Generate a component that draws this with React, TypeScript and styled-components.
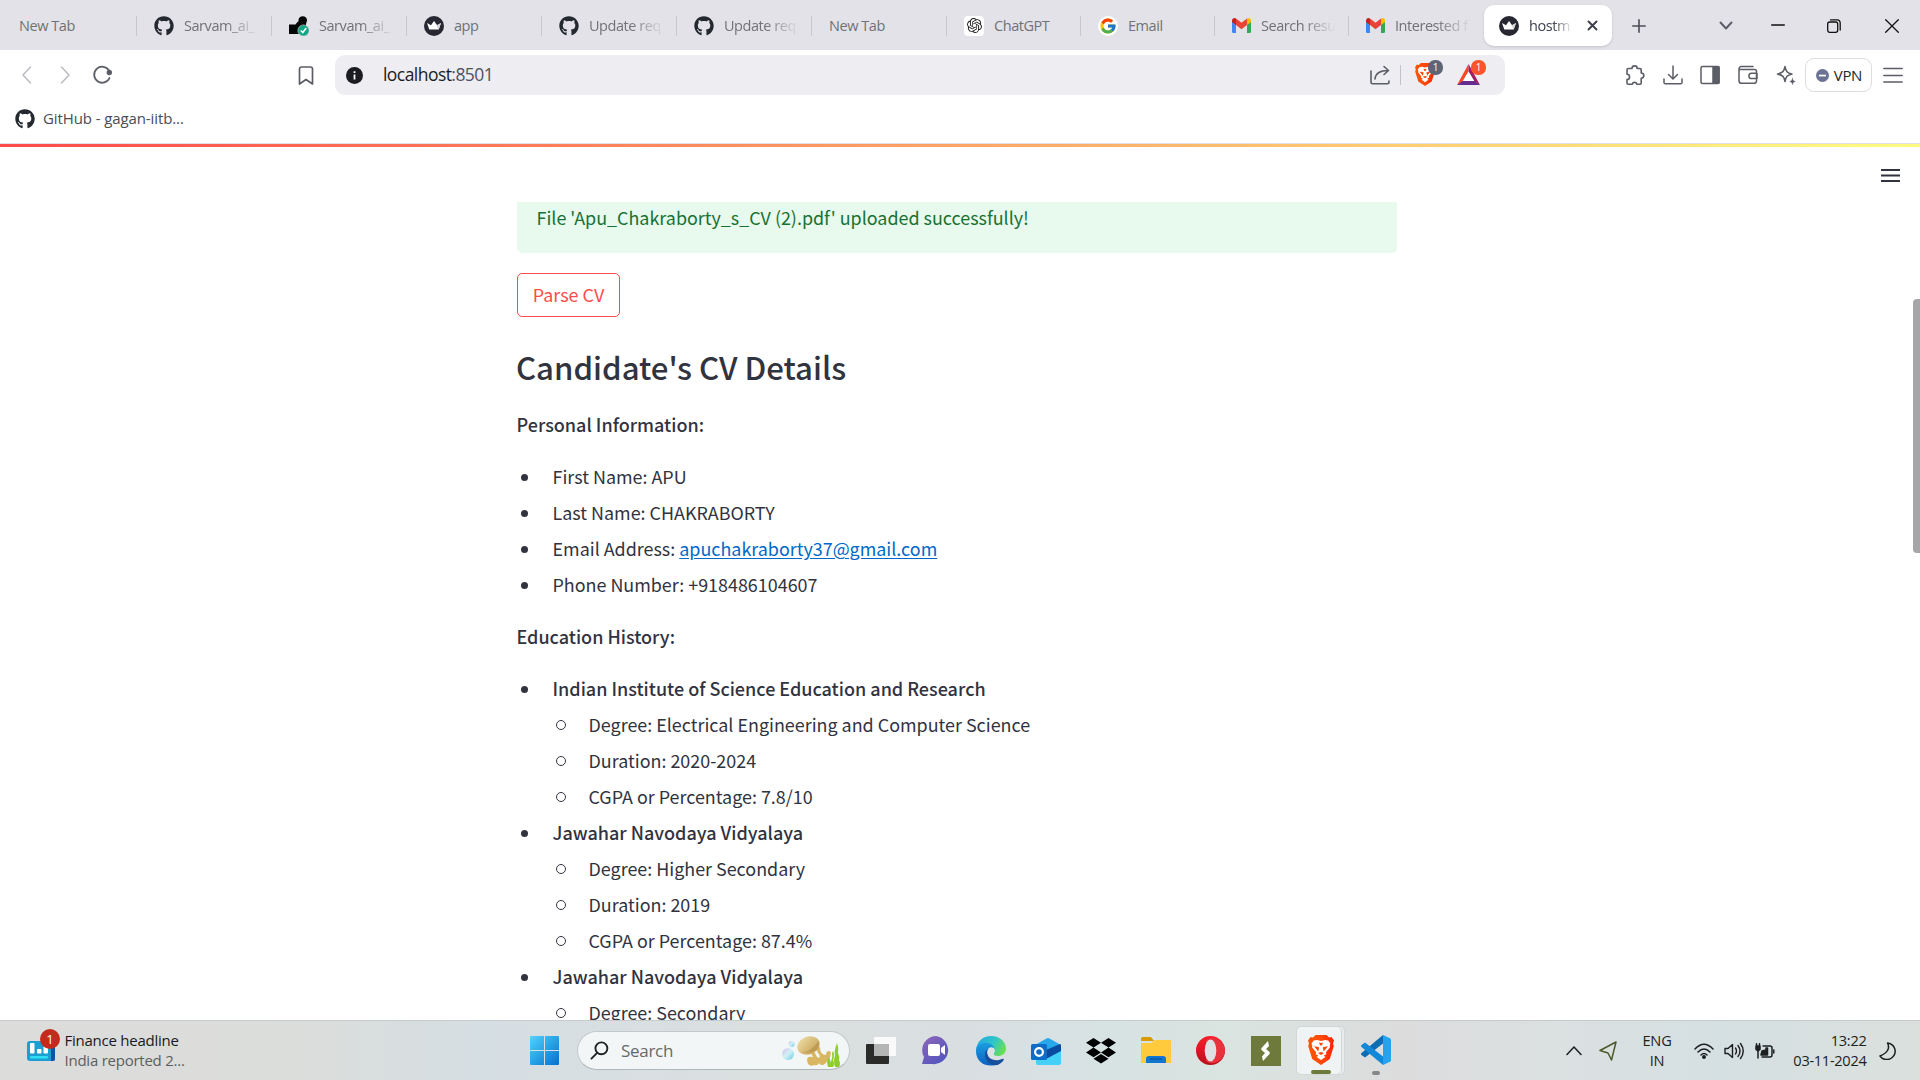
import React from "react";
import styled, { createGlobalStyle } from "styled-components";
import { FaGithub } from "react-icons/fa";
import { FcGoogle } from "react-icons/fc";
import { SiOpenai } from "react-icons/si";

const ui = `"Open Sans", "Noto Sans", sans-serif`;
const body = `"Noto Sans CJK SC", "Open Sans", sans-serif`;

const Global = createGlobalStyle`
  * { box-sizing: border-box; }
  html, body { margin: 0; padding: 0; overflow: hidden; background: #fff; }
  svg { display: block; flex: none; }
`;

const Screen = styled.div`
  width: 1920px; height: 1080px; display: flex; flex-direction: column;
  overflow: hidden; background: #fff; font-family: ${ui};
`;

/* ---------- tab strip ---------- */
const TabStrip = styled.div`
  height: 50px; flex: none; background: #e3e2e8; display: flex; align-items: center; padding-top: 1px;
`;
const Tab = styled.div<{ $w: number; $last?: boolean }>`
  width: ${p => p.$w}px; height: 20px; display: flex; align-items: center; flex: none;
  padding-left: 17px; gap: 10px; border-right: 1px solid ${p => (p.$last ? "transparent" : "#c9c8ce")};
  &:first-child { padding-left: 19px; }
`;
const TabLabel = styled.span<{ $w?: number; $fade?: boolean; $dark?: boolean }>`
  font-size: 14.5px; line-height: 22px; white-space: nowrap; flex: none;
  color: ${p => (p.$dark ? "#3b3e4f" : "#707275")};
  letter-spacing: -0.45px;
  width: ${p => (p.$w ? p.$w + "px" : "auto")};
  ${p => p.$fade && "mask-image: linear-gradient(90deg, #000 55%, transparent 100%);"}
`;
const ActiveTab = styled.div`
  width: 128px; height: 41px; border-radius: 10px; background: #fff; flex: none;
  display: flex; align-items: center; padding-left: 15px; gap: 10px; box-shadow: 0 1px 3px #0002;
`;
const WindowButtons = styled.div`
  margin-left: auto; display: flex; align-items: center; gap: 36px; padding-right: 21.5px;
`;
const Push = styled.div<{ $l: number }>`margin-left: ${p => p.$l}px; flex: none;`;

/* ---------- toolbar ---------- */
const Toolbar = styled.div`
  height: 50px; flex: none; display: flex; align-items: center; color: #5b5e66;
`;
const NavGroup = styled.div`
  width: 335px; display: flex; align-items: center; padding-left: 20px; flex: none;
`;
const AddressBar = styled.div`
  width: 1170px; height: 40px; border-radius: 10px; background: #ededf2; flex: none;
  display: flex; align-items: center; padding: 0 19px 0 11px;
`;
const Url = styled.span`
  font-size: 17.5px; line-height: 24px; color: #1b1c22; letter-spacing: -0.55px; margin: 0 0 2px 20px; flex: 1;
  i { font-style: normal; color: #4c5263; }
`;
const Rule = styled.div`width: 1px; height: 20px; background: #c2c2ca; margin: 0 14px 0 10px;`;
const BadgeHost = styled.div<{ $w: number }>`position: relative; width: ${p => p.$w}px; height: 24px;`;
const Badge = styled.span<{ $bg: string; $x: number }>`
  position: absolute; left: ${p => p.$x}px; top: -3px; width: 15px; height: 15px; border-radius: 7px;
  background: ${p => p.$bg}; color: #fff; font-size: 10px; line-height: 15px; text-align: center;
`;
const ToolIcons = styled.div`
  display: flex; align-items: center; gap: 17.7px; margin-left: 120px;
`;
const Vpn = styled.div`
  width: 67px; height: 34px; border: 1px solid #dddde3; border-radius: 9px; margin-left: -8px;
  display: flex; align-items: center; justify-content: center; gap: 5px;
  font-size: 15px; letter-spacing: -0.3px; color: #24252b;
`;
const Bookmarks = styled.div`
  height: 43px; flex: none; display: flex; align-items: center; gap: 8px; padding: 0 0 5px 15px;
`;
const BookmarkText = styled.span`
  font-size: 15px; line-height: 20px; letter-spacing: -0.1px; color: #4a4d54; margin-bottom: 2px;
`;

/* ---------- page ---------- */
const Page = styled.main`
  height: 877px; flex: none; display: flex; overflow: hidden; border-top: 1px solid #dfe0e8;
  flex-direction: column; font-family: ${body}; color: #31333f;
`;
const Decoration = styled.div`height: 3px; flex: none; background: linear-gradient(90deg, #ff4b4b, #fffd80);`;
const PageBody = styled.div`display: flex; flex: 1; min-height: 0;`;
const Side = styled.div`width: 517px; flex: none;`;
const Column = styled.div`
  width: 880px; flex: none; padding-top: 55px; display: flex; flex-direction: column; align-items: flex-start;
`;
const Right = styled.div`
  flex: 1; display: flex; justify-content: flex-end; align-items: flex-start; padding-top: 19px;
`;
const ScrollTrack = styled.div`width: 7px; height: 254px; margin-top: 133px; background: #a6a6a8; border-radius: 4px 0 0 4px; margin-left: 12px;`;
const Alert = styled.div`
  width: 880px; height: 51px; background: #e8f9ee; border-radius: 0 0 5px 5px; color: #177233;
  padding: 0 19.5px; font-size: 17.92px; line-height: 30px; flex: none;
`;
const ParseButton = styled.button`
  width: 103px; height: 44px; margin: 20px 0 0; padding: 0 0 2px; border: 1px solid #ff4b4b; border-radius: 5px;
  background: #fff; color: #ff4b4b; font: 400 17.92px/30px ${body}; flex: none;
`;
const Title = styled.h2`
  margin: 29px 0 0 -1px; font-size: 31.15px; line-height: 42px; font-weight: 500; flex: none;
`;
const Heading = styled.p<{ $top: number }>`
  margin: ${p => p.$top}px 0 19px -0.5px; font-size: 18px; line-height: 30px; font-weight: 500; flex: none;
`;
const List = styled.ul`margin: 0; padding: 0; list-style: none; flex: none;`;
const Row = styled.li<{ $nested?: boolean; $strong?: boolean }>`
  height: 36px; display: flex; align-items: center; line-height: 36px; white-space: pre;
  font-size: ${p => (p.$strong ? 18 : 17.92)}px;
  padding-left: ${p => (p.$nested ? 39 : 4)}px; font-weight: ${p => (p.$strong ? 500 : 400)};
  &::before {
    content: ""; flex: none; border-radius: 50%; margin-top: 2px;
    width: ${p => (p.$nested ? 8 : 7)}px; height: ${p => (p.$nested ? 8 : 7)}px;
    margin-right: ${p => (p.$nested ? 22.5 : 24.5)}px;
    ${p => (p.$nested ? "border: 1px solid #31333f;" : "background: #31333f;")}
  }
`;
const MailLink = styled.a`color: #0068c9; text-decoration: underline; text-underline-offset: 2px;`;

/* ---------- taskbar ---------- */
const Taskbar = styled.footer`
  height: 60px; flex: none; display: flex; align-items: center; border-top: 1px solid #c6cccd;
  background: linear-gradient(90deg, #dcdcdb 0, #dbdddb 300px, #d5dee2 480px, #d8dfe2 620px, #dbdfdf 800px,
    #d9dee1 960px, #d7e2e3 1100px, #dae4e0 1230px, #dcdcdd 1400px, #dbe0e1 1560px, #d5e0e2 1720px, #dbe0dd 1920px);
`;
const Widgets = styled.div`width: 517px; padding-left: 27px; display: flex; align-items: center; gap: 8.5px; flex: none;`;
const WidgetIcon = styled.div`position: relative; width: 29px; height: 44px; padding-top: 12px;`;
const WidgetBadge = styled.span`
  position: absolute; left: 13px; top: 0; width: 20px; height: 20px; border-radius: 50%; background: #c42b1c;
  color: #fff; font-size: 13px; line-height: 20px; text-align: center;
`;
const WidgetLines = styled.div`margin-bottom: 2px;`;
const WidgetText = styled.div<{ $c?: string }>`
  font-size: 15px; line-height: 20px; color: ${p => p.$c || "#1a1a1a"}; letter-spacing: -0.24px; white-space: nowrap;
`;
const Slot = styled.div`width: 55px; height: 59px; display: flex; align-items: center; justify-content: center; flex: none;`;
const SearchBox = styled.div`
  width: 273px; height: 39px; margin: 0 3px 0 5px; border-radius: 20px; background: #f3f6f7; border: 1px solid #c3cacc;
  border-bottom-color: #aeb6b8; display: flex; align-items: center; padding: 0 7px 0 12px; flex: none;
  span { flex: 1; margin-left: 12px; font-size: 17px; letter-spacing: -0.3px; color: #66696b; }
`;
const ActiveSlot = styled.div`
  width: 49px; height: 49px; display: flex; background: #e8ecec; border: 1px solid #d2d7d7; border-radius: 5px;
`;
const ActiveFace = styled.div`
  width: 45px; height: 47px; background: #f0f3f3; border-right: 1px solid #cfd5d5; border-radius: 5px; flex: none;
  display: flex; flex-direction: column; align-items: center; justify-content: space-between; padding: 8px 0 0 4px;
`;
const Indicator = styled.i<{ $w: number; $c: string }>`
  display: block; width: ${p => p.$w}px; height: 4px; border-radius: 2px; background: ${p => p.$c};
`;
const CodeStack = styled.div`
  height: 49px; display: flex; flex-direction: column; justify-content: space-between; align-items: center; padding-top: 9px;
`;
const Tray = styled.div`margin-left: auto; display: flex; align-items: center; padding-right: 24.5px; color: #1d1f20;`;
const TrayText = styled.div<{ $align: string; $w: number; $ls: number }>`
  width: ${p => p.$w}px; text-align: ${p => p.$align}; font-size: 14.6px; line-height: 20px; letter-spacing: ${p => p.$ls}px;
  white-space: nowrap; margin-top: -2px;
`;

/* ---------- drawings ---------- */
const Stroke = ({ w = 20, h = w, vb = "0 0 20 20", sw = 1.5, c = "currentColor", children }: any) => (
  <svg width={w} height={h} viewBox={vb} fill="none" stroke={c} strokeWidth={sw} strokeLinecap="round" strokeLinejoin="round">{children}</svg>
);
const Crown = () => (
  <svg width="20" height="20" viewBox="0 0 20 20">
    <circle cx="10" cy="10" r="10" fill="#262730" />
    <path d="M3 7l4 2.2L10 5l3 4.2L17 7l-2.3 6.4H5.3z" fill="#fff" /><path d="M10 5l3 4.2L17 7l-2.3 6.4z" fill="#d6d6da" />
  </svg>
);
const Sheet = () => (
  <svg width="20" height="20" viewBox="0 0 20 20">
    <path d="M0 8.500h6.500l1.500-2C9 6 9.500 5.500 9.500 4a4.300 4.300 0 018.500 0c0 2-.8 2.800-1 4.500V18H0z" fill="#050505" />
    <circle cx="14.5" cy="14.5" r="5.6" fill="#12a583" stroke="#e3e2e8" strokeWidth="0.6" /><path d="M11.800 14.500l2 2 3.500-4.400" stroke="#fff" strokeWidth="1.6" fill="none" />
  </svg>
);
const Gmail = () => (
  <svg width="19" height="15" viewBox="0 0 19 15">
    <path d="M0 3h4v12H1.3A1.3 1.3 0 010 13.7z" fill="#4285f4" />
    <path d="M15 3h4v10.700a1.300 1.300 0 01-1.300 1.300H15z" fill="#34a853" />
    <path d="M0 2.500C0 .4 2.300-.6 4 .6V7L0 4z" fill="#c5221f" />
    <path d="M19 2.500C19 .4 16.700-.6 15 .6V7l4-3z" fill="#fbbc04" />
    <path d="M4 .6l5.500 4.200L15 .6V7l-5.500 4.200L4 7z" fill="#ea4335" />
  </svg>
);
const White = styled.div<{ $r: number }>`
  width: 20px; height: 20px; border-radius: ${p => p.$r}px; background: #fff; display: flex; align-items: center; justify-content: center; flex: none;
`;
const Brave = ({ s, h }: { s: number; h: number }) => (
  <svg width={s} height={h} viewBox="0 0 26 30">
    <defs><linearGradient id="bv"><stop offset="0" stopColor="#ff5500" /><stop offset=".5" stopColor="#ff4a08" /><stop offset="1" stopColor="#ff2000" /></linearGradient></defs>
    <path d="M7.500 0h11l2.500 2.500 2.500-.4L26 5.500l-1 3 .8 2.500-4 13L13 30l-8.800-6L.2 11 1 8.500l-1-3L2.500 2.100l2.500.4z" fill="url(#bv)" />
    <path d="M9 5l4 .9L17 5l3.300.6 2.200 3.200-.8 2 .2 1.700-4 4.700.5 2-2.700 1.300 1.700 1.500L13 25l-4.400-3 1.700-1.500-2.700-1.300.5-2-4-4.700.2-1.700-.8-2 2.200-3.200z" fill="#fff" />
    <path d="M6 11.300l4.600.6.5 1.100-.9 3.500-1.500-1.900zM20 11.300l-4.600.6-.5 1.100.9 3.500 1.500-1.900zM10 18l3-.9 3 .9-3 2zM11 7.500l2 .4 2-.4-1 2.700-1 .3-1-.3z" fill="#ff4505" />
  </svg>
);
const Edge = () => (
  <svg width="30" height="30" viewBox="0 0 30 30">
    <defs>
      <linearGradient id="e1" x1="0" x2="1" y1=".2" y2=".6"><stop offset="0" stopColor="#21a8e2" /><stop offset=".55" stopColor="#30c6c8" /><stop offset="1" stopColor="#6be04f" /></linearGradient>
      <linearGradient id="e2" x1="0" x2="0" y1="0" y2="1"><stop offset="0" stopColor="#1c9de0" /><stop offset="1" stopColor="#0a62c4" /></linearGradient>
    </defs>
    <path d="M0 14C1 5 7 0 15 0c9 0 15 6 15 12.500 0 5-4 7.500-8 7.500-3.500 0-5-1.300-4.500-2.200 1.500-1.500 1.500-3.500.5-5C15 7 4 6 0 14z" fill="url(#e1)" />
    <path d="M0 15C0 9 5 6.800 9.500 6.800c4.500 0 8 2.400 8.800 5.500-3-2.200-6.300-.8-7 2.700-1.500 7 5 12.500 11.700 12.500C15 32 0 29.500 0 15z" fill="url(#e2)" />
    <path d="M11.500 13c-2.500 8 5 12 10.500 11.200 3-.4 4.800-1.800 5.800-1.200.6.600-2.300 4.500-6.300 6C15 30 9 26 9 19c0-3 1-5 2.500-6z" fill="#164f9c" />
    <path d="M18 12.600c-2.500-2-6-.6-6 3 0 1.500 1 4 2.500 5.300 3.500 2.600 9 2.600 12.500.2-4 .6-10-.2-9.500-3.300 1.500-1.500 1.500-3.700.5-5.200z" fill="#dde3e4" />
  </svg>
);
const Seafood = () => (
  <svg width="60" height="34" viewBox="0 0 60 34">
    <defs>
      <linearGradient id="bb" x1="0" x2="1" y1="0" y2="1"><stop offset="0" stopColor="#d8bff0" /><stop offset=".5" stopColor="#d0f2f5" /><stop offset="1" stopColor="#62c7e0" /></linearGradient>
      <linearGradient id="sh" x1="0" x2=".6" y1="0" y2="1"><stop offset="0" stopColor="#eedfa9" /><stop offset="1" stopColor="#c9a65a" /></linearGradient>
    </defs>
    <circle cx="6" cy="20" r="6" fill="url(#bb)" /><circle cx="9.500" cy="10" r="3" fill="url(#bb)" />
    <path d="M27 15l4 8q-6-1-6 3l1 4q3 3 6 1 4 1 5-2l2-4-4-2-4-8zM33 14l5 8-2 4q1 5 4 5t6-5l2-3q2-6-1-6t-3 4q-6 0-6-8z" fill="#d9b662" />
    <ellipse cx="26.500" cy="11.500" rx="11.500" ry="8.800" transform="rotate(-22 26.500 11.500)" fill="url(#sh)" />
    <path d="M17 18q7 1 12-3t7.500-8q2 5-3 9t-16.500 2z" fill="#a9843e" opacity=".45" />
    <path d="M46 33q-2-6 1-10 2 4 1 6 3-4 2-10l1-2q2 4 0 9 2 4 0 7zM53 33q-2-6 0-11-1-6 2-13 2 5 1 10 2 4 1 7 2 4 0 7z" fill="#8fce2a" />
  </svg>
);

const App = () => (
  <Screen>
    <Global />
    <TabStrip>
      <Tab $w={137}><TabLabel>New Tab</TabLabel></Tab>
      <Tab $w={135}><FaGithub size={20} color="#24292f" /><TabLabel $w={75} $fade>Sarvam_ai_</TabLabel></Tab>
      <Tab $w={135}><Sheet /><TabLabel $w={75} $fade>Sarvam_ai_</TabLabel></Tab>
      <Tab $w={135}><Crown /><TabLabel>app</TabLabel></Tab>
      <Tab $w={135}><FaGithub size={20} color="#24292f" /><TabLabel $w={75} $fade>Update req</TabLabel></Tab>
      <Tab $w={135}><FaGithub size={20} color="#24292f" /><TabLabel $w={75} $fade>Update req</TabLabel></Tab>
      <Tab $w={135}><TabLabel>New Tab</TabLabel></Tab>
      <Tab $w={134}><White $r={4}><SiOpenai size={15} color="#222" /></White><TabLabel>ChatGPT</TabLabel></Tab>
      <Tab $w={134}><White $r={10}><FcGoogle size={18} /></White><TabLabel>Email</TabLabel></Tab>
      <Tab $w={134}><Gmail /><TabLabel $w={75} $fade>Search resu</TabLabel></Tab>
      <Tab $w={135} $last><Gmail /><TabLabel $w={76} $fade>Interested f</TabLabel></Tab>
      <ActiveTab><Crown /><TabLabel $w={44} $dark $fade>hostm</TabLabel><Push $l={4}><Stroke w={11} vb="0 0 11 11" sw={1.9} c="#3b3e48"><path d="M1.500 1.500l8 8M9.500 1.500l-8 8" /></Stroke></Push></ActiveTab>
      <Push $l={19.5}><Stroke w={14} vb="0 0 14 14" sw={1.6} c="#4b4e58"><path d="M7 .8v12.400M.8 7h12.400" /></Stroke></Push>
      <WindowButtons>
        <Stroke w={14} h={9} vb="0 0 14 9" sw={2} c="#5b5e68"><path d="M1.500 1.500L7 7.500l5.500-6" /></Stroke>
        <Push $l={2}><Stroke w={14} h={14} vb="0 0 14 14" sw={1.3} c="#111"><path d="M.7 6h12.600" /></Stroke></Push>
        <Push $l={6}><Stroke w={14} h={14} vb="0 0 14 14" sw={1.3} c="#111"><rect x=".7" y="3" width="10" height="10.300" rx="2" /><path d="M3.500.8H10a3.200 3.200 0 013.200 3.200v7" /></Stroke></Push>
        <Push $l={7.5}><Stroke w={14} h={14} vb="0 0 14 14" sw={1.3} c="#111"><path d="M.7.7l12.600 12.600M13.300.7L.7 13.300" /></Stroke></Push>
      </WindowButtons>
    </TabStrip>

    <Toolbar>
      <NavGroup>
        <Stroke w={14} h={18} vb="0 0 14 18" c="#bbbcc1"><path d="M10.500 1L3 9l7.500 8" /></Stroke>
        <Push $l={24}><Stroke w={14} h={18} vb="0 0 14 18" c="#bbbcc1"><path d="M3.500 1L11 9l-7.500 8" /></Stroke></Push>
        <Push $l={20}><Stroke w={20} sw={1.8}><path d="M17 5.500A8 8 0 1 0 17.500 13" /><circle cx="17.300" cy="7.500" r="1.800" fill="currentColor" /></Stroke></Push>
        <Push $l={186}><Stroke w={16} h={19} vb="0 0 16 19" sw={1.7}><path d="M1.500 3a2 2 0 012-2h9a2 2 0 012 2v15L8 13.500 1.500 18z" /></Stroke></Push>
      </NavGroup>
      <AddressBar>
        <svg width="17" height="17" viewBox="0 0 17 17"><circle cx="8.500" cy="8.500" r="8.500" fill="#1b1b22" /><path d="M7.600 7.500h1.800v5H7.600zM7.600 4.300h1.800v1.800H7.600z" fill="#fff" /></svg>
        <Url>localhost<i>:8501</i></Url>
        <Stroke w={20} sw={1.6}><path d="M1 6v11.200a1.500 1.500 0 001.500 1.500h15A1.500 1.500 0 0019 17.200V16M5 14c.5-5 4-8.500 13-8.500M14 1.500l4.500 4-4.500 4" /></Stroke>
        <Rule />
        <BadgeHost $w={42}><Brave s={20} h={23} /><Badge $bg="#5f6477" $x={13}>1</Badge></BadgeHost>
        <BadgeHost $w={29}>
          <svg width="23" height="22" viewBox="0 0 23 22"><path d="M11.500 1L0 22l5.500-3.500 6-10z" fill="#ff4724" /><path d="M11.500 1L23 22l-5.500-3.500-6-10z" fill="#9e1f63" /><path d="M0 22h23l-5.500-4h-12z" fill="#662d91" /><path d="M11.500 8.500l5.500 9.500H6z" fill="#fff" /></svg>
          <Badge $bg="#fb542b" $x={14}>1</Badge>
        </BadgeHost>
      </AddressBar>
      <ToolIcons>
        <Stroke sw={1.6}><path d="M3.200 3.500H7a2.600 2.600 0 015.200 0H15a1.200 1.200 0 011.200 1.200V8a2.600 2.600 0 010 5.200V18a1.200 1.200 0 01-1.200 1.200h-3a2.500 2.500 0 00-4.800 0h-4A1.200 1.200 0 012 18v-3.500a2.600 2.600 0 000-5.200V4.700a1.200 1.200 0 011.200-1.200z" /></Stroke>
        <Stroke><path d="M10 1v12.500M5.500 9.500L10 14l4.500-4.500M1 14v3.500A1.300 1.300 0 002.300 18.800h15.400a1.300 1.300 0 001.300-1.300V14" /></Stroke>
        <Stroke><rect x="1" y="1.500" width="18" height="17" rx="1.500" /><path d="M13 2h6v16h-6z" fill="currentColor" /></Stroke>
        <Stroke><path d="M1 4.500h15.500a2 2 0 012 2V16a2.300 2.300 0 01-2.300 2.300H3.300A2.300 2.300 0 011 16V3.800A2.300 2.300 0 013.300 1.500H15M19 8.300h-5.500a2.600 2.600 0 000 5.200H19z" /></Stroke>
        <Stroke><path d="M9 1.500c1 5 2 6.200 7 7.500-5 1.300-6 2.500-7 7.500-1-5-2-6.200-7.500-7.500C7 7.700 8 6.500 9 1.500z" /><path d="M16.500 13.500c.4 2 .8 2.500 2.700 3-1.900.5-2.300 1-2.700 3-.4-2-.8-2.500-2.700-3 1.900-.5 2.300-1 2.700-3z" fill="currentColor" strokeWidth="0.500" /></Stroke>
        <Vpn><svg width="13" height="13" viewBox="0 0 13 13"><circle cx="6.500" cy="6.500" r="6.500" fill="#6b7294" /><path d="M3 5.700h7v1.700H3z" fill="#fff" /></svg>VPN</Vpn>
        <Push $l={-7.5}><Stroke sw={1.4}><path d="M.8 3.500h18.400M.8 10.500h18.400M.8 17h18.400" /></Stroke></Push>
      </ToolIcons>
    </Toolbar>

    <Bookmarks><FaGithub size={20} color="#24292f" /><BookmarkText>GitHub - gagan-iitb...</BookmarkText></Bookmarks>

    <Page>
      <Decoration />
      <PageBody>
        <Side />
        <Column>
          <Alert>File 'Apu_Chakraborty_s_CV (2).pdf' uploaded successfully!</Alert>
          <ParseButton>Parse CV</ParseButton>
          <Title>Candidate's CV Details</Title>
          <Heading $top={21}>Personal Information:</Heading>
          <List>
            <Row>First Name: APU</Row>
            <Row>Last Name: CHAKRABORTY</Row>
            <Row>Email Address: <MailLink>apuchakraborty37@gmail.com</MailLink></Row>
            <Row>Phone Number: +918486104607</Row>
          </List>
          <Heading $top={19}>Education History:</Heading>
          <List>
            <Row $strong>Indian Institute of Science Education and Research</Row>
            <Row $nested>Degree: Electrical Engineering and Computer Science</Row>
            <Row $nested>Duration: 2020-2024</Row>
            <Row $nested>CGPA or Percentage: 7.8/10</Row>
            <Row $strong>Jawahar Navodaya Vidyalaya</Row>
            <Row $nested>Degree: Higher Secondary</Row>
            <Row $nested>Duration: 2019</Row>
            <Row $nested>CGPA or Percentage: 87.4%</Row>
            <Row $strong>Jawahar Navodaya Vidyalaya</Row>
            <Row $nested>Degree: Secondary</Row>
          </List>
        </Column>
        <Right>
          <svg width="20" height="20" viewBox="0 0 20 20" stroke="#31333f" strokeWidth="2"><path d="M0 4h19M0 9.500h19M0 15h19" /></svg>
          <ScrollTrack />
        </Right>
      </PageBody>
    </Page>

    <Taskbar>
      <Widgets>
        <WidgetIcon>
          <svg width="29" height="21" viewBox="0 0 29 21"><rect width="28" height="20" rx="3" fill="#1b9fd3" /><path d="M24 0h2a2 2 0 012 2v16a2 2 0 01-2 2h-2z" fill="#0d54a8" /><rect x="3" y="2" width="4.500" height="10.500" rx="1" fill="#fff" /><rect x="10" y="8" width="4.500" height="4.500" rx="1" fill="#fff" /><rect x="16.500" y="5" width="4.500" height="7.500" rx="1" fill="#fff" /><rect x="3" y="15" width="18" height="2.500" rx="1" fill="#2fe0f5" /></svg>
          <WidgetBadge>1</WidgetBadge>
        </WidgetIcon>
        <WidgetLines><WidgetText>Finance headline</WidgetText><WidgetText $c="#5c5e5e">India reported 2...</WidgetText></WidgetLines>
      </Widgets>
      <Slot>
        <svg width="29" height="29" viewBox="0 0 29 29"><defs><linearGradient id="win" x1="0" y1="0" x2="1" y2="1"><stop offset="0" stopColor="#4fd4fb" /><stop offset="1" stopColor="#0470d0" /></linearGradient></defs>
          <path d="M1 0h13v14H0V1a1 1 0 011-1zM15 0h13a1 1 0 011 1v13H15zM0 15h14v14H1a1 1 0 01-1-1zM15 15h14v13a1 1 0 01-1 1H15z" fill="url(#win)" /></svg>
      </Slot>
      <SearchBox>
        <Stroke w={19} h={19} sw={2} c="#222"><circle cx="12" cy="7.700" r="6.300" /><path d="M7.500 12.500L1.500 18.500" /></Stroke>
        <span>Search</span>
        <Seafood />
      </SearchBox>
      <Slot><svg width="30" height="29" viewBox="0 0 30 29"><rect y="8" width="23" height="20" rx="1" fill="#2b2b2a" /><rect x="8" y="1" width="22" height="19" rx="1" fill="#fafafa" /><path d="M8 8h15v12H8z" fill="#b4b5b5" /></svg></Slot>
      <Slot><svg width="30" height="29" viewBox="0 0 30 29"><defs><linearGradient id="ch" x1="0" y1="0" x2=".8" y2="1"><stop offset="0" stopColor="#9065b8" /><stop offset="1" stopColor="#5055c0" /></linearGradient></defs><path d="M15 0a14 14 0 11-4 28H1l2-7A14 14 0 0115 0z" fill="url(#ch)" /><rect x="7" y="8" width="12" height="12" rx="2" fill="#fff" /><path d="M20 12l4-3v10l-4-3z" fill="#fff" /></svg></Slot>
      <Slot><Edge /></Slot>
      <Slot><svg width="30" height="28" viewBox="0 0 30 28"><path d="M4 8L15.500 1.500q1.500-.8 3 0L30 8v12H5z" fill="#28a8ea" /><path d="M5 22v4a2 2 0 002 2h21a2 2 0 002-2V14z" fill="#45d0f7" /><path d="M15 13l14-6 1 1v6L15 22z" fill="#0a4ba0" /><rect y="7" width="16" height="16" rx="1.500" fill="#0f6cc7" /><circle cx="8" cy="15" r="3.900" stroke="#fff" strokeWidth="2.200" fill="none" /></svg></Slot>
      <Slot><svg width="30" height="26" viewBox="0 0 30 26"><path d="M7.500 0L15 4.800 7.500 9.600 0 4.800zM22.500 0L30 4.800l-7.500 4.800L15 4.800zM7.500 9.600l7.500 4.800-7.500 4.800L0 14.400zM22.500 9.600l7.500 4.800-7.500 4.800-7.500-4.800zM15 16l7.500 4.800-7.500 4.800-7.500-4.800z" fill="#000" /></svg></Slot>
      <Slot><svg width="30" height="27" viewBox="0 0 30 27"><path d="M0 1.500Q0 0 1.500 0H10l3 4H0z" fill="#d99a00" /><path d="M0 6h10l4-3h15a1 1 0 011 1v22H0z" fill="#ffcb3d" /><path d="M5 26v-4q0-3 3-3h14q3 0 3 3v4z" fill="#1076cf" /><path d="M9 22h12" stroke="#0b559c" strokeWidth="1.200" /></svg></Slot>
      <Slot><svg width="29" height="29" viewBox="0 0 29 29"><defs><linearGradient id="op" x2="0" y2="1"><stop offset="0" stopColor="#ff1b2d" /><stop offset="1" stopColor="#b70f1c" /></linearGradient></defs><ellipse cx="14.500" cy="14.500" rx="14.500" ry="14.500" fill="url(#op)" /><path d="M10 4q5-4 11-1 8 4 8 11.500T21 26q-6 3-11-1z" fill="#e8323c" /><ellipse cx="14.500" cy="14.500" rx="5.800" ry="11" fill="#dee1e1" /></svg></Slot>
      <Slot><svg width="30" height="30" viewBox="0 0 30 30"><rect width="30" height="30" fill="#6d7a3c" /><path d="M17 5l-6.500 7q-1 1.500.5 2.500l3 2.500-3 3.500 1 4.500 6.500-7q1-1.500-.5-2.500l-3-2.500 3-3z" fill="#fff" /></svg></Slot>
      <Slot><ActiveSlot><ActiveFace><Brave s={26} h={30} /><Indicator $w={20} $c="#6d7a3c" /></ActiveFace></ActiveSlot></Slot>
      <Slot><CodeStack><svg width="30" height="30" viewBox="0 0 30 30"><path d="M22 0l7 3.300q1 .5 1 1.500v20.400q0 1-1 1.500L22 30z" fill="#23a3f0" /><path d="M22 0v8.500L4 22.500l-3.500-2.500q-1-1 0-2z" fill="#0c6db5" /><path d="M22 30v-8.500L4 7.500.5 10q-1 1 0 2z" fill="#1288d6" /></svg><Indicator $w={8} $c="#858889" /></CodeStack></Slot>
      <Tray>
        <Stroke w={16} h={10} vb="0 0 16 10" sw={1.5}><path d="M1 8.500L8 1l7 7.500" /></Stroke>
        <Push $l={17}><Stroke w={18} h={20} vb="0 0 18 20" sw={1.5} c="#4b5a2b"><path d="M17 1L1 9.500l8 2.500 3.500 7z" /></Stroke></Push>
        <Push $l={20}><TrayText $align="center" $w={40} $ls={-0.2}>ENG<br />IN</TrayText></Push>
        <Push $l={17}><Stroke w={20} h={16} vb="0 0 20 16" sw={1.5}><path d="M1 6q9-9.500 18 0M4 9q6-6 12 0M7 12q3-3 6 0" /><circle cx="10" cy="14" r="1.200" fill="currentColor" /></Stroke></Push>
        <Push $l={10}><Stroke w={20} h={18} vb="0 0 20 18" sw={1.4}><path d="M1 6.500h3l4.500-4v13l-4.500-4H1zM11.500 6q2 3 0 6M14 3.500q4 5.500 0 11M16.500 1.500q5.500 7.500 0 15" /></Stroke></Push>
        <Push $l={10.5}><Stroke w={20} h={16} vb="0 0 20 16" sw={1.5}><path d="M8 3h7q2 0 2 2v7q0 2-2 2H7M18.800 7v3M3 8v7" /><path d="M1 3h4v3.500L3 8 1 6.500zM1.500.8v2M4.500.8v2M7 8l4-1V5h1.500v7H6z" fill="currentColor" /></Stroke></Push>
        <Push $l={12}><TrayText $align="right" $w={80} $ls={-0.3}>13:22<br />03-11-2024</TrayText></Push>
        <Push $l={12}><Stroke w={17} h={18} vb="0 0 17 18" sw={1.5}><path d="M8.500 1q4 8-7.500 13a8.300 8.300 0 107.500-13z" /></Stroke></Push>
      </Tray>
    </Taskbar>
  </Screen>
);
export default App;
